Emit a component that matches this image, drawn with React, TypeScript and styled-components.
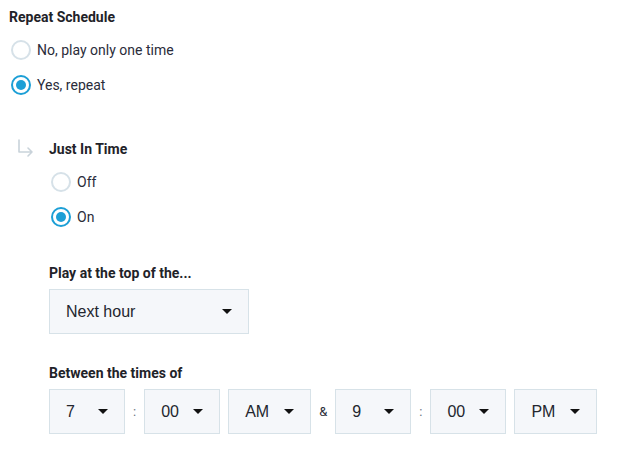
import React from 'react'
import styled, { createGlobalStyle } from 'styled-components'

const GlobalStyle = createGlobalStyle`
  html, body {
    margin: 0;
    padding: 0;
    background: #ffffff;
  }
  body {
    font-family: Roboto, "Liberation Sans", Arial, sans-serif;
    color: #22252b;
  }
`

const Root = styled.div`
  padding: 7px 9px;
`

const Heading = styled.div`
  font-size: 14px;
  font-weight: 700;
  line-height: 20px;
  color: #1f2329;
`

const RadioGroup = styled.div`
  margin-top: 5px;
  margin-left: 2px;
  display: flex;
  flex-direction: column;
`

const RadioRow = styled.label`
  height: 35px;
  display: flex;
  align-items: center;
  gap: 6px;
  font-size: 14px;
  color: #2a2c3a;
  cursor: pointer;
`

const RadioCircle = styled.span<{ $checked?: boolean }>`
  width: 20px;
  height: 20px;
  box-sizing: border-box;
  border-radius: 50%;
  border: 2px solid ${(p) => (p.$checked ? '#1c9fd6' : '#d6e1e8')};
  display: flex;
  align-items: center;
  justify-content: center;
  background: #fff;

  &::after {
    content: '';
    width: 10px;
    height: 10px;
    border-radius: 50%;
    background: ${(p) => (p.$checked ? '#1c9fd6' : 'transparent')};
  }
`

const SubSection = styled.div`
  margin-top: 37px;
  display: flex;
`

const IconColumn = styled.div`
  width: 40px;
  flex-shrink: 0;
`

const SubBody = styled.div`
  display: flex;
  flex-direction: column;
`

const FieldLabel = styled(Heading)`
  margin-top: 29px;
`

const Select = styled.div<{ $width: number }>`
  width: ${(p) => p.$width}px;
  height: 45px;
  box-sizing: border-box;
  border: 1px solid #d7e2e8;
  background: #f5f7fa;
  padding: 0 16px;
  display: flex;
  align-items: center;
  justify-content: space-between;
  font-size: 16px;
  color: #23262e;
  font-family: "Liberation Sans", Arial, sans-serif;
`

const SelectWrap = styled.div`
  margin-top: 6px;
`

const TimeRow = styled.div`
  margin-top: 6px;
  display: flex;
  align-items: center;
  gap: 8px;
`

const Separator = styled.span`
  font-size: 13px;
  color: #6b7480;
  line-height: 1;
`

const Amp = styled.span`
  font-size: 13px;
  color: #2a2c3a;
`

const Caret = () => (
  <svg width="10" height="5" viewBox="0 0 10 5">
    <path d="M0 0 L10 0 L5 5 Z" fill="#111" />
  </svg>
)

const ReturnArrow = () => (
  <svg width="28" height="20" viewBox="0 0 28 20">
    <path
      d="M10 1 V13 H23 M19 9 L23 13 L19 17"
      fill="none"
      stroke="#c9d3da"
      strokeWidth="1.6"
      strokeLinecap="round"
      strokeLinejoin="round"
    />
  </svg>
)

const Radio = ({ label, checked }: { label: string; checked?: boolean }) => (
  <RadioRow>
    <RadioCircle $checked={checked} />
    {label}
  </RadioRow>
)

const Dropdown = ({ value, width }: { value: string; width: number }) => (
  <Select $width={width}>
    <span>{value}</span>
    <Caret />
  </Select>
)

export default function App() {
  return (
    <Root>
      <GlobalStyle />
      <Heading>Repeat Schedule</Heading>
      <RadioGroup>
        <Radio label="No, play only one time" />
        <Radio label="Yes, repeat" checked />
      </RadioGroup>

      <SubSection>
        <IconColumn>
          <ReturnArrow />
        </IconColumn>
        <SubBody>
          <Heading>Just In Time</Heading>
          <RadioGroup>
            <Radio label="Off" />
            <Radio label="On" checked />
          </RadioGroup>

          <FieldLabel>Play at the top of the...</FieldLabel>
          <SelectWrap>
            <Dropdown value="Next hour" width={200} />
          </SelectWrap>

          <FieldLabel>Between the times of</FieldLabel>
          <TimeRow>
            <Dropdown value="7" width={76} />
            <Separator>:</Separator>
            <Dropdown value="00" width={76} />
            <Dropdown value="AM" width={83} />
            <Amp>&amp;</Amp>
            <Dropdown value="9" width={76} />
            <Separator>:</Separator>
            <Dropdown value="00" width={76} />
            <Dropdown value="PM" width={83} />
          </TimeRow>
        </SubBody>
      </SubSection>
    </Root>
  )
}
